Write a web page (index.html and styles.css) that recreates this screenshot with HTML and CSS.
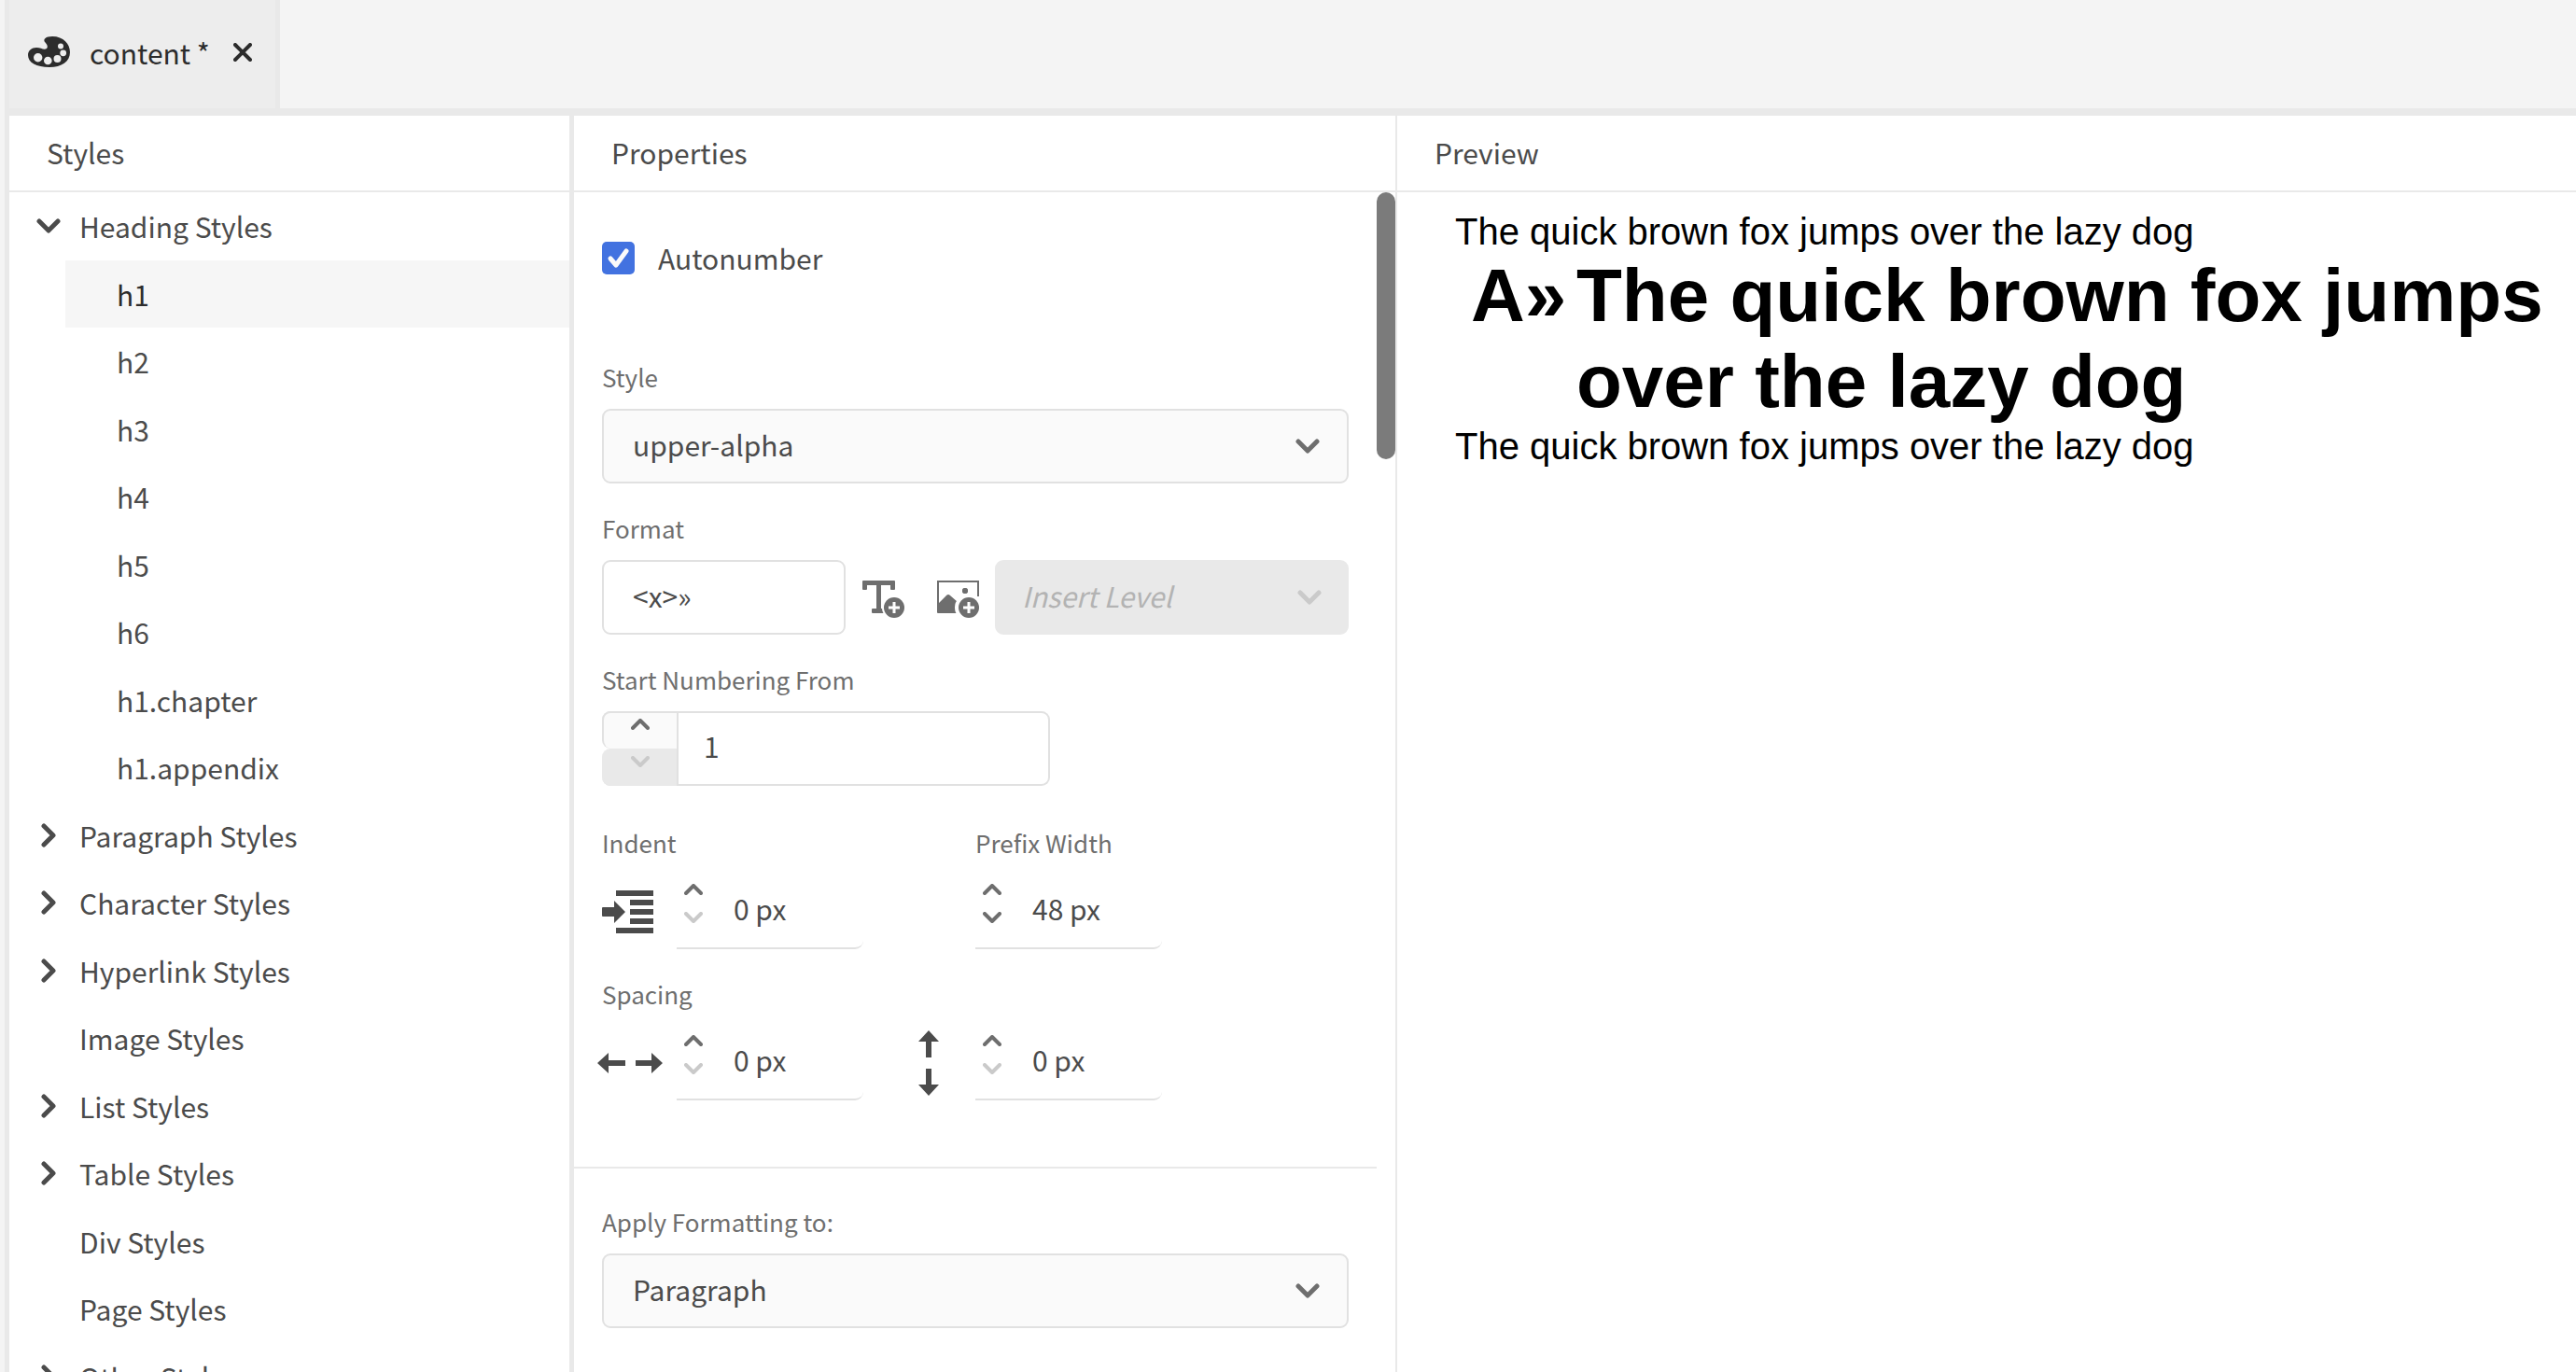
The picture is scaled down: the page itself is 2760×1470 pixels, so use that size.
FILE: index.html
```html
<!DOCTYPE html>
<html lang="en">
<head>
<meta charset="utf-8">
<title>content</title>
<meta name="viewport" content="width=device-width, initial-scale=1">
<link rel="stylesheet" href="styles.css">
</head>
<body>
<svg class="sprite" aria-hidden="true">
  <symbol id="chevron-right" viewBox="0 0 16 26"><path d="M3 3l10 10L3 23" fill="none" stroke="currentColor" stroke-width="5" stroke-linecap="round" stroke-linejoin="round"/></symbol>
  <symbol id="chevron-down" viewBox="0 0 26 16"><path d="M3 3l10 10L23 3" fill="none" stroke="currentColor" stroke-width="5" stroke-linecap="round" stroke-linejoin="round"/></symbol>
  <symbol id="step-up" viewBox="0 0 20 12"><path d="M2 10l8-8 8 8" fill="none" stroke="currentColor" stroke-width="4" stroke-linecap="round" stroke-linejoin="round"/></symbol>
  <symbol id="step-down" viewBox="0 0 20 12"><path d="M2 2l8 8 8-8" fill="none" stroke="currentColor" stroke-width="4" stroke-linecap="round" stroke-linejoin="round"/></symbol>
</svg>
<div class="app">
  <header class="tabs">
    <div class="tab">
      <svg class="tab-icon" viewBox="0 0 46 34" aria-hidden="true">
        <path fill="currentColor" d="M26 0C38 0 45 8 45 17C45 27 36 33 23 33C9 33 0 28 0 20C0 15 4 12 9 12C14 12 17 15 20 13C22 11 20 8 18 6C16 3 19 0 26 0Z"/>
        <g class="tab-icon-wells"><circle cx="10.7" cy="22.700" r="4.700"/><circle cx="21.300" cy="26" r="4.300"/><circle cx="31.500" cy="24" r="4"/><circle cx="37.700" cy="17.800" r="3.400"/><circle cx="35" cy="10.500" r="3"/></g>
      </svg>
      <span class="tab-name">content *</span>
      <button class="tab-close" type="button" aria-label="Close">
        <svg viewBox="0 0 20 20" aria-hidden="true"><path d="M2 2l16 16M18 2L2 18" stroke="currentColor" stroke-width="4" stroke-linecap="round"/></svg>
      </button>
    </div>
  </header>
  <main class="panels">
    <section class="panel styles-panel">
      <h2 class="panel-title">Styles</h2>
      <ul class="tree">
        <li><button class="row" type="button" aria-expanded="true"><svg class="down"><use href="#chevron-down"/></svg>Heading Styles</button>
          <ul class="subtree">
            <li><button class="row selected" type="button">h1</button></li>
            <li><button class="row" type="button">h2</button></li>
            <li><button class="row" type="button">h3</button></li>
            <li><button class="row" type="button">h4</button></li>
            <li><button class="row" type="button">h5</button></li>
            <li><button class="row" type="button">h6</button></li>
            <li><button class="row" type="button">h1.chapter</button></li>
            <li><button class="row" type="button">h1.appendix</button></li>
          </ul>
        </li>
        <li><button class="row" type="button" aria-expanded="false"><svg class="right"><use href="#chevron-right"/></svg>Paragraph Styles</button></li>
        <li><button class="row" type="button" aria-expanded="false"><svg class="right"><use href="#chevron-right"/></svg>Character Styles</button></li>
        <li><button class="row" type="button" aria-expanded="false"><svg class="right"><use href="#chevron-right"/></svg>Hyperlink Styles</button></li>
        <li><button class="row leaf" type="button">Image Styles</button></li>
        <li><button class="row" type="button" aria-expanded="false"><svg class="right"><use href="#chevron-right"/></svg>List Styles</button></li>
        <li><button class="row" type="button" aria-expanded="false"><svg class="right"><use href="#chevron-right"/></svg>Table Styles</button></li>
        <li><button class="row leaf" type="button">Div Styles</button></li>
        <li><button class="row leaf" type="button">Page Styles</button></li>
        <li><button class="row" type="button" aria-expanded="false"><svg class="right"><use href="#chevron-right"/></svg>Other Styles</button></li>
      </ul>
    </section>
    <section class="panel properties-panel">
      <h2 class="panel-title">Properties</h2>
      <div class="panel-body">
        <form class="form">
          <div class="group">
            <label class="check"><input type="checkbox" checked><svg viewBox="0 0 35 35" aria-hidden="true"><path d="M9 18l6 7L26 10" fill="none" stroke="currentColor" stroke-width="5" stroke-linecap="round" stroke-linejoin="round"/></svg>Autonumber</label>
            <div class="field">
              <label for="style">Style</label>
              <div class="select"><select id="style"><option>upper-alpha</option></select><svg><use href="#chevron-down"/></svg></div>
            </div>
            <div class="field">
              <label for="format">Format</label>
              <div class="format-row">
                <input class="textbox" id="format" type="text" value="&lt;x&gt;»">
                <button class="icon-button" type="button" aria-label="Insert text">
                  <svg viewBox="0 0 46 40" aria-hidden="true"><path fill="currentColor" d="M1 0H34Q35 0 35 1V9Q35 10 34 10H31Q30 10 30 9V5H20V30H25V35H11Q10 35 10 34V31Q10 30 11 30H15V5H5V9Q5 10 4 10H1Q0 10 0 9V1Q0 0 1 0Z"/><circle cx="34" cy="29" r="13" fill="#fff"/><circle cx="34" cy="29" r="11" fill="currentColor"/><path d="M34 23v12M28 29h12" stroke="#fff" stroke-width="3"/></svg>
                </button>
                <button class="icon-button" type="button" aria-label="Insert image">
                  <svg viewBox="0 0 46 40" aria-hidden="true"><path d="M1 34V1H44V17" fill="none" stroke="currentColor" stroke-width="2"/><path fill="currentColor" d="M0 26L10 16Q12 14 14 16L22 23V35H1Q0 35 0 34Z"/><circle cx="30" cy="11" r="3" fill="currentColor"/><circle cx="33" cy="29" r="14" fill="#fff"/><circle cx="30" cy="11" r="3" fill="currentColor"/><circle cx="34" cy="29" r="11" fill="currentColor"/><path d="M34 23v12M28 29h12" stroke="#fff" stroke-width="3"/></svg>
                </button>
                <div class="select disabled"><select aria-label="Insert Level" disabled><option>Insert Level</option></select><svg><use href="#chevron-down"/></svg></div>
              </div>
            </div>
            <div class="field">
              <label for="start">Start Numbering From</label>
              <div class="stepper boxed">
                <div class="steps">
                  <button type="button" aria-label="Increase start"><svg><use href="#step-up"/></svg></button>
                  <button type="button" aria-label="Decrease start" disabled><svg><use href="#step-down"/></svg></button>
                </div>
                <input id="start" type="text" value="1">
              </div>
            </div>
            <div class="metrics indents">
              <label class="at-start" for="indent">Indent</label>
              <label class="at-end" for="prefix">Prefix Width</label>
              <div class="metric-icon"><svg class="indent-icon" viewBox="0 0 60 46" aria-hidden="true"><path fill="currentColor" d="M15 0H55V6H15ZM30 10H55V16H30ZM30 20H55V26H30ZM30 30H55V36H30ZM15 40H55V46H15ZM1 18H13V11L25 23L13 35V28H1Q0 28 0 27V19Q0 18 1 18Z"/></svg></div>
              <div class="stepper quiet">
                <div class="steps">
                  <button type="button" aria-label="Increase indent"><svg><use href="#step-up"/></svg></button>
                  <button type="button" aria-label="Decrease indent" disabled><svg><use href="#step-down"/></svg></button>
                </div>
                <input id="indent" type="text" value="0 px">
              </div>
              <div class="stepper quiet at-end">
                <div class="steps">
                  <button type="button" aria-label="Increase prefix width"><svg><use href="#step-up"/></svg></button>
                  <button type="button" aria-label="Decrease prefix width"><svg><use href="#step-down"/></svg></button>
                </div>
                <input id="prefix" type="text" value="48 px">
              </div>
            </div>
            <div class="metrics">
              <label class="full-row" for="spacing-x">Spacing</label>
              <div class="metric-icon"><svg class="horizontal-icon" viewBox="0 0 70 22" aria-hidden="true"><path fill="currentColor" d="M0 11L12 0V8H30V14H12V22ZM70 11L58 0V8H41V14H58V22Z"/></svg></div>
              <div class="stepper quiet">
                <div class="steps">
                  <button type="button" aria-label="Increase horizontal spacing"><svg><use href="#step-up"/></svg></button>
                  <button type="button" aria-label="Decrease horizontal spacing" disabled><svg><use href="#step-down"/></svg></button>
                </div>
                <input id="spacing-x" type="text" value="0 px">
              </div>
              <div class="metric-icon middle"><svg class="vertical-icon" viewBox="0 0 22 70" aria-hidden="true"><path fill="currentColor" d="M11 0L22 12H14V29H8V12H0ZM11 70L22 58H14V41H8V58H0Z"/></svg></div>
              <div class="stepper quiet">
                <div class="steps">
                  <button type="button" aria-label="Increase vertical spacing"><svg><use href="#step-up"/></svg></button>
                  <button type="button" aria-label="Decrease vertical spacing" disabled><svg><use href="#step-down"/></svg></button>
                </div>
                <input type="text" value="0 px" aria-label="Vertical spacing">
              </div>
            </div>
          </div>
          <div class="group">
            <div class="field">
              <label for="apply">Apply Formatting to:</label>
              <div class="select"><select id="apply"><option>Paragraph</option></select><svg><use href="#chevron-down"/></svg></div>
            </div>
          </div>
        </form>
        <div class="scrollbar"><div class="thumb"></div></div>
      </div>
    </section>
    <section class="panel">
      <h2 class="panel-title">Preview</h2>
      <article class="preview">
        <p>The quick brown fox jumps over the lazy dog</p>
        <h1><span class="prefix">A»</span><span>The quick brown fox jumps over the lazy dog</span></h1>
        <p>The quick brown fox jumps over the lazy dog</p>
      </article>
    </section>
  </main>
</div>
</body>
</html>
```
FILE: styles.css
```css
* { box-sizing: border-box; }

body {
  margin: 0;
  background: #f4f4f4;
  color: #4b4b4b;
  font: 30px/40px "Noto Sans CJK SC", "Noto Sans", sans-serif;
}

button, input, select { font: inherit; color: inherit; margin: 0; }
button { padding: 0; border: 0; background: none; }
svg { display: block; flex: none; }
.sprite { position: absolute; width: 0; height: 0; }

.app {
  display: flex;
  flex-direction: column;
  height: 100vh;
  margin-left: 5px;
  border-left: 5px solid #e9e9e9;
  overflow: hidden;
}

/* Document tabs */
.tabs { display: flex; flex: none; height: 124px; border-bottom: 8px solid #e9e9e9; }
.tab {
  display: flex;
  align-items: center;
  padding: 0 25px 4px 20px;
  border-right: 5px solid #e9e9e9;
  background: #ededed;
  color: #2c2c2c;
}
.tab-icon { width: 46px; height: 34px; }
.tab-icon-wells { fill: #ededed; }
.tab-name { padding-left: 20px; }
.tab-close { margin-left: 25px; }
.tab-close svg { width: 20px; height: 20px; }

/* Panels */
.panels {
  flex: 1;
  display: grid;
  grid-template-columns: 605fr 882fr 1263fr;
  min-height: 0;
}
.panel { display: flex; flex-direction: column; min-width: 0; min-height: 0; overflow: hidden; background: #fff; }
.styles-panel { border-right: 5px solid #e9e9e9; }
.properties-panel { border-right: 2px solid #e9e9e9; }
.panel-title {
  flex: none;
  margin: 0;
  padding: 19px 40px 21px;
  border-bottom: 2px solid #e9e9e9;
  font-size: 30px;
  font-weight: 400;
  line-height: 40px;
}

/* Style tree */
.tree, .subtree { margin: 0; padding: 0; list-style: none; }
.row {
  display: flex;
  align-items: center;
  width: 100%;
  height: 72px;
  padding: 0 0 0 29px;
  text-align: left;
}
.down { width: 26px; height: 16px; margin-right: 20px; }
.right { width: 16px; height: 26px; margin: 0 25px 0 5px; }
.row.leaf { padding-left: 75px; }
.subtree { padding-left: 60px; }
.subtree .row { padding-left: 55px; }
.row.selected { background: #f6f6f6; color: #2c2c2c; }
.tree > li:nth-child(odd) > .row, .subtree > li:nth-child(even) { margin-bottom: 1px; }

/* Properties form */
.panel-body { display: flex; flex: 1; min-height: 0; }
.form { flex: 1; }
.group { display: flex; flex-direction: column; gap: 30px; padding: 53px 30px 71px; }
.group + .group { padding-top: 39px; border-top: 2px solid #e9e9e9; }
.check { display: grid; grid-template-columns: 35px 1fr; column-gap: 25px; height: 35px; margin-bottom: 62px; line-height: 35px; }
.check input {
  grid-area: 1 / 1;
  width: 35px;
  height: 35px;
  border-radius: 5px;
  background: #4272e0;
  appearance: none;
}
.check svg { grid-area: 1 / 1; width: 35px; height: 35px; color: #fafafa; }
.field > label, .metrics > label {
  display: block;
  color: #6e6e6e;
  font-size: 26px;
  line-height: 36px;
}
.field > label { margin-bottom: 16px; }

.select { display: grid; flex: 1; align-items: center; min-width: 0; }
.select select {
  grid-area: 1 / 1;
  width: 100%;
  height: 80px;
  padding: 0 80px 4px 31px;
  border: 2px solid #e1e1e1;
  border-radius: 9px;
  background: #fafafa;
  appearance: none;
  opacity: 1;
}
.select svg { grid-area: 1 / 1; justify-self: end; width: 26px; height: 16px; margin-right: 31px; color: #6e6e6e; pointer-events: none; }
.select.disabled select { padding-left: 27px; border-color: #e9e9e9; background: #e9e9e9; color: #b3b3b3; font-style: italic; }
.select.disabled svg { margin-right: 29px; color: #cacaca; }

.format-row { display: flex; align-items: center; }
.textbox {
  width: 261px;
  height: 80px;
  padding: 0 31px 4px;
  border: 2px solid #e1e1e1;
  border-radius: 9px;
  background: #fff;
}
.icon-button { display: flex; align-items: center; width: 80px; height: 80px; padding: 4px 0 0 18px; color: #6e6e6e; }
.icon-button svg { width: 46px; height: 40px; }

.stepper { display: flex; height: 80px; }
.stepper input { flex: 1; width: 0; padding: 0 0 6px; border: 0; background: none; }
.steps { display: flex; flex-direction: column; flex: none; color: #6e6e6e; }
.steps button { display: flex; flex: 1; justify-content: center; }
.steps svg { width: 20px; height: 12px; }
.steps button:disabled { color: #cacaca; }

.boxed { width: 60%; border: 2px solid #e1e1e1; border-left: 0; border-radius: 9px; }
.boxed .steps { width: 82px; margin: -2px 0; border-right: 2px solid #e1e1e1; }
.boxed .steps button { padding-top: 6px; border: 2px solid #e1e1e1; border-width: 2px 0 0 2px; border-radius: 9px 0 0 9px; background: #fafafa; }
.boxed .steps button:disabled { border-color: #e9e9e9; background: #e9e9e9; }
.boxed input { padding-left: 27px; }

.metrics { display: grid; grid-template-columns: 80px 200px 120px 200px; row-gap: 16px; }
.indents { margin-top: 13px; }
.full-row { grid-column: 1 / -1; }
.at-start { grid-column: 1 / span 3; }
.at-end { grid-column: 4; }
.metric-icon { display: flex; align-items: center; justify-content: center; width: 60px; }
.metric-icon.middle { width: 120px; padding-left: 20px; }
.indent-icon { width: 60px; height: 46px; }
.horizontal-icon { width: 70px; height: 22px; }
.vertical-icon { width: 22px; height: 70px; }
.quiet { border-bottom: 2px solid #e1e1e1; border-radius: 0 0 9px 0; }
.quiet .steps { width: 36px; margin-right: 25px; }
.quiet .steps button { align-items: flex-end; flex: none; height: 30px; }
.quiet .steps button:first-child { height: 22px; }

.scrollbar { flex: none; width: 20px; }
.thumb { height: 22.6%; border-radius: 10px; background: #7b7b7b; }

/* Preview */
.preview { padding: 19px 22px 0 62px; color: #000; font-family: "Liberation Sans", Arial, sans-serif; font-size: 40px; line-height: 46px; }
.preview p, .preview h1 { margin: 0; }
.preview h1 { display: flex; padding-left: 17px; font-size: 80px; line-height: 92px; }
.prefix { flex: none; width: 113px; }
```
